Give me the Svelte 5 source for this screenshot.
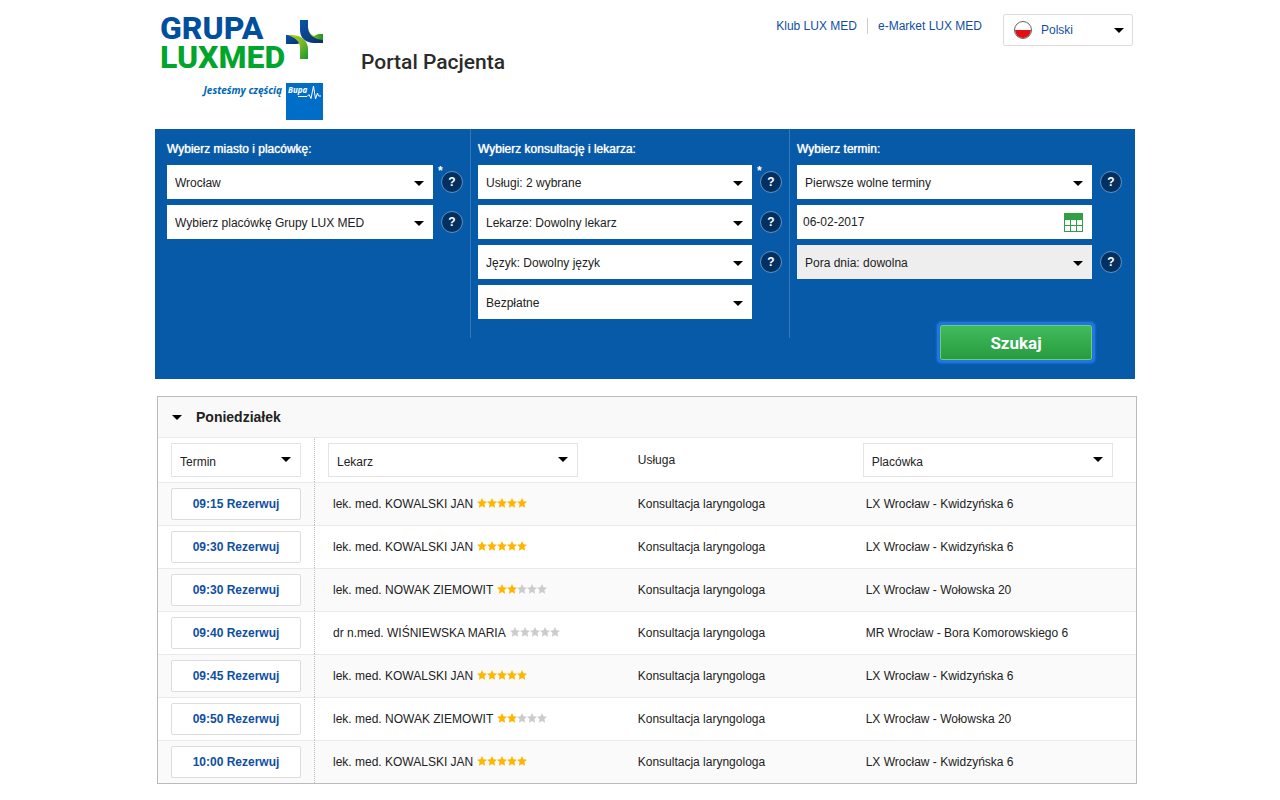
<script lang="ts">
  interface Field {
    id: string
    label: string
    value: string
    type?: 'select' | 'date'
    required?: boolean
    help?: boolean
    disabled?: boolean
  }

  interface Visit {
    time: string
    doctor: string
    rating: number
    clinic: string
  }

  const service = 'Konsultacja laryngologa'

  const groups: { title: string; fields: Field[] }[] = [
    {
      title: 'Wybierz miasto i placówkę:',
      fields: [
        { id: 'city', label: 'Miasto', value: 'Wrocław', required: true, help: true },
        { id: 'clinic', label: 'Placówka', value: 'Wybierz placówkę Grupy LUX MED', help: true }
      ]
    },
    {
      title: 'Wybierz konsultację i lekarza:',
      fields: [
        { id: 'service', label: 'Usługi', value: 'Usługi: 2 wybrane', required: true, help: true },
        { id: 'doctor', label: 'Lekarze', value: 'Lekarze: Dowolny lekarz', help: true },
        { id: 'language', label: 'Język', value: 'Język: Dowolny język', help: true },
        { id: 'payment', label: 'Płatność', value: 'Bezpłatne' }
      ]
    },
    {
      title: 'Wybierz termin:',
      fields: [
        { id: 'term', label: 'Termin', value: 'Pierwsze wolne terminy', help: true },
        { id: 'date', label: 'Data', value: '06-02-2017', type: 'date' },
        { id: 'daytime', label: 'Pora dnia', value: 'Pora dnia: dowolna', help: true, disabled: true }
      ]
    }
  ]

  const visits: Visit[] = [
    { time: '09:15', doctor: 'lek. med. KOWALSKI JAN', rating: 5, clinic: 'LX Wrocław - Kwidzyńska 6' },
    { time: '09:30', doctor: 'lek. med. KOWALSKI JAN', rating: 5, clinic: 'LX Wrocław - Kwidzyńska 6' },
    { time: '09:30', doctor: 'lek. med. NOWAK ZIEMOWIT', rating: 2, clinic: 'LX Wrocław - Wołowska 20' },
    { time: '09:40', doctor: 'dr n.med. WIŚNIEWSKA MARIA', rating: 0, clinic: 'MR Wrocław - Bora Komorowskiego 6' },
    { time: '09:45', doctor: 'lek. med. KOWALSKI JAN', rating: 5, clinic: 'LX Wrocław - Kwidzyńska 6' },
    { time: '09:50', doctor: 'lek. med. NOWAK ZIEMOWIT', rating: 2, clinic: 'LX Wrocław - Wołowska 20' },
    { time: '10:00', doctor: 'lek. med. KOWALSKI JAN', rating: 5, clinic: 'LX Wrocław - Kwidzyńska 6' }
  ]

  let open = $state(true)
</script>

<div class="page">
  <header class="header">
    <a class="logo" href="#home">
      <span class="logo-main">
        <span class="logo-name">
          <span class="blue">GRUPA</span>
          <span class="green">LUXMED</span>
        </span>
        <svg class="cross" viewBox="0 0 37 39" width="37" height="39" aria-hidden="true">
          <defs>
            <linearGradient id="stem" x1="0" y1="0" x2="1" y2="1">
              <stop offset="0" stop-color="#b5cf12" />
              <stop offset="0.5" stop-color="#7db928" />
              <stop offset="1" stop-color="#17962f" />
            </linearGradient>
            <linearGradient id="leaf" x1="0" y1="0" x2="1" y2="0">
              <stop offset="0" stop-color="#c3d600" />
              <stop offset="1" stop-color="#17962f" />
            </linearGradient>
            <linearGradient id="navy" x1="0" y1="0" x2="1" y2="1">
              <stop offset="0" stop-color="#0a56a8" />
              <stop offset="1" stop-color="#0b2f6b" />
            </linearGradient>
          </defs>
          <path fill="url(#leaf)" d="M22 8c1 4 3 7 6 8c2-1 3-2 5-2h4v9C29 21 22 16 20 8z" />
          <path fill="url(#navy)" d="M14 0h8v7c0 8 6 12 15 13v3h-9c-8 0-14-5-14-13z" />
          <path fill="url(#navy)" d="M0 15h5l10 7c-2 2-4 2-6 2H0z" />
          <path fill="url(#stem)" d="M2 15c13-1 20 5 20 14v10h-8V28c0-6-4-10-12-13z" />
        </svg>
      </span>
      <span class="logo-part">
        <span class="claim">Jesteśmy częścią</span>
        <span class="bupa">
          <span>Bupa</span>
          <svg viewBox="0 0 37 37" width="37" height="37" aria-hidden="true">
            <path fill="none" stroke="#fff" d="M12 13.5h9l2-2 2 4L27.500 3l2 13 2-6 1 3h2.500" />
          </svg>
        </span>
      </span>
    </a>
    <h1>Portal Pacjenta</h1>
    <nav class="links">
      <a href="#klub">Klub LUX MED</a>
      <a href="#market">e-Market LUX MED</a>
    </nav>
    <div class="select lang">
      <svg class="flag" viewBox="0 0 18 18" width="18" height="18" aria-hidden="true">
        <circle cx="9" cy="9" r="8" fill="#fff" />
        <path fill="#e30f13" d="M1 9h16a8 8 0 0 1-16 0z" />
        <circle cx="9" cy="9" r="8.500" fill="none" stroke="#666" />
      </svg>
      <select aria-label="Język portalu"><option>Polski</option></select>
    </div>
  </header>

  <form class="search" onsubmit={(e) => e.preventDefault()}>
    {#each groups as group, i}
      <section class="group">
        <h2>{group.title}</h2>
        {#each group.fields as field}
          <div class="field">
            {#if field.type === 'date'}
              <div class="date">
                <input aria-label={field.label} id={field.id} value={field.value} />
                <svg viewBox="0 0 19 19" width="19" height="19" aria-hidden="true">
                  <path fill="#2fa043" d="M0 0h19v19H0z" />
                  <path fill="#fff" d="M1 7h5v5H1zM7 7h5v5H7zM13 7h5v5h-5zM1 13h5v5H1zM7 13h5v5H7zM13 13h5v5h-5z" />
                </svg>
              </div>
            {:else}
              <div class="select" class:disabled={field.disabled}>
                <select aria-label={field.label} id={field.id} disabled={field.disabled}>
                  <option>{field.value}</option>
                </select>
              </div>
            {/if}
            <div class="hint">
              {#if field.required}<span class="required">*</span>{/if}
              {#if field.help}<button class="help" type="button">?</button>{/if}
            </div>
          </div>
        {/each}
        {#if i === groups.length - 1}
          <button class="submit" type="submit">Szukaj</button>
        {/if}
      </section>
    {/each}
  </form>

  <section class="results">
    <button class="day" type="button" aria-expanded={open} onclick={() => (open = !open)}>
      Poniedziałek
    </button>
    {#if open}
      <table>
        <thead>
          <tr>
            <th class="term">
              <div class="select filter"><select aria-label="Termin wizyty"><option>Termin</option></select></div>
            </th>
            <th class="doctor">
              <div class="select filter"><select aria-label="Lekarz"><option>Lekarz</option></select></div>
            </th>
            <th class="service">Usługa</th>
            <th class="clinic">
              <div class="select filter"><select aria-label="Placówka wizyty"><option>Placówka</option></select></div>
            </th>
          </tr>
        </thead>
        <tbody>
          {#each visits as visit}
            <tr>
              <td class="term"><button class="book" type="button">{visit.time} Rezerwuj</button></td>
              <td class="doctor">
                <div class="person">
                  {visit.doctor}
                  <svg class="stars" viewBox="0 0 50 10" width="50" height="10" aria-hidden="true">
                    {#each [0, 1, 2, 3, 4] as n}
                      <path
                        class:on={n < visit.rating}
                        transform="translate({n * 10} 0)"
                        d="M5 0l1.500 3.300 3.500.4-2.600 2.400.7 3.700L5 8 1.900 9.800l.7-3.700L0 3.700l3.500-.4z"
                      />
                    {/each}
                  </svg>
                </div>
              </td>
              <td>{service}</td>
              <td class="clinic">{visit.clinic}</td>
            </tr>
          {/each}
        </tbody>
      </table>
    {/if}
  </section>
</div>

<style>
  :global(body) {
    background: #fff;
    color: #222;
    font: 12px/16px 'Liberation Sans', Arial, sans-serif;
  }

  button,
  input,
  select {
    margin: 0;
    font: inherit;
    color: inherit;
  }

  button {
    padding: 0;
    cursor: pointer;
  }

  .page {
    box-sizing: border-box;
    max-width: 990px;
    margin: 0 auto;
    padding: 0 0 16px 10px;
  }

  .header {
    display: flex;
    align-items: flex-start;
    padding: 14px 2px 9px 5px;
  }

  .logo {
    width: 163px;
    text-decoration: none;
  }

  .logo-main,
  .logo-part {
    display: flex;
    justify-content: space-between;
  }

  .logo-name {
    display: flex;
    flex-direction: column;
    width: 122px;
    font: 800 32px/29px Roboto, sans-serif;
  }

  .blue {
    color: #004f9f;
  }

  .green {
    color: #00a52b;
  }

  .cross {
    flex: none;
    margin-top: 6px;
  }

  .logo-part {
    justify-content: flex-end;
    gap: 4px;
    margin-top: 11px;
  }

  .claim {
    color: #0066b3;
    font: italic 700 10px/14px 'Noto Sans', sans-serif;
  }

  .bupa {
    position: relative;
    width: 37px;
    height: 37px;
    background: #006ec7;
    color: #fff;
    font: italic 700 8px/14px 'Noto Sans', sans-serif;
    text-indent: 2px;
  }

  .bupa svg {
    position: absolute;
    inset: 0;
  }

  h1 {
    flex: 1;
    margin: 34px 0 0 38px;
    color: #2b2b2b;
    font: 500 21px/28px Roboto, sans-serif;
  }

  .links {
    display: flex;
    margin: 4px 21px 0 0;
  }

  .links a {
    color: #0f4fa3;
    text-decoration: none;
  }

  .links a + a {
    margin-left: 10px;
    padding-left: 10px;
    border-left: 1px solid #ccc;
  }

  .select {
    position: relative;
    flex: 1;
    background: #fff;
  }

  .select::after {
    content: '';
    position: absolute;
    top: 16px;
    right: 9px;
    border: 5px solid transparent;
    border-top-color: #000;
    border-bottom: 0;
    pointer-events: none;
  }

  .select select {
    display: block;
    width: 100%;
    height: 34px;
    padding: 2px 24px 0 8px;
    border: 0;
    border-radius: 0;
    background: none;
    appearance: none;
    opacity: 1;
  }

  .disabled {
    background: #eee;
  }

  .lang {
    flex: none;
    width: 128px;
    border: 1px solid #ddd;
    border-radius: 2px;
    color: #0f4fa3;
  }

  .lang select {
    height: 30px;
    padding: 0 24px 0 37px;
  }

  .lang::after {
    top: 13px;
    right: 8px;
  }

  .flag {
    position: absolute;
    top: 6px;
    left: 10px;
    overflow: visible;
  }

  .search {
    display: grid;
    grid-template-columns: 316fr 319fr 345fr;
    align-items: start;
    padding-bottom: 19px;
    background: #075aa8;
  }

  .group {
    box-sizing: border-box;
    min-height: 209px;
    padding: 12px 7px 0;
    border-right: 1px solid #3478b8;
  }

  .group:first-child {
    padding-left: 12px;
  }

  .group:last-child {
    padding-right: 13px;
    border: 0;
  }

  h2 {
    margin: 0 0 8px;
    color: #fff;
    font: inherit;
    text-shadow: 0 0 1px #fff;
  }

  .field {
    display: flex;
    margin-bottom: 6px;
  }

  .date {
    display: flex;
    flex: 1;
    align-items: center;
    height: 34px;
    padding-right: 9px;
    background: #fff;
  }

  .date input {
    flex: 1;
    min-width: 0;
    padding: 0 6px;
    border: 0;
    background: none;
  }

  .hint {
    position: relative;
    display: flex;
    align-items: center;
    width: 22px;
    margin-left: 8px;
  }

  .required {
    position: absolute;
    top: -2px;
    left: -3px;
    color: #fff;
    font-weight: 700;
  }

  .help {
    width: 22px;
    height: 22px;
    border: 1px solid #5b93c9;
    border-radius: 50%;
    background: #04305f;
    color: #fff;
    font-weight: 700;
  }

  .submit {
    display: block;
    width: 152px;
    height: 35px;
    margin: 46px 30px 0 auto;
    border: 1px solid #6ccb80;
    border-radius: 2px;
    background: linear-gradient(#41bb5b, #279c3f);
    box-shadow: 0 0 0 3px #1f76dc, 0 0 2px 4px #1a69c8;
    color: #fff;
    font: 700 17px/32px Roboto, sans-serif;
  }

  .results {
    margin: 17px -2px 0 2px;
    border: 1px solid #bbb;
  }

  .day {
    display: flex;
    align-items: center;
    gap: 14px;
    width: 100%;
    height: 40px;
    padding-left: 14px;
    border: 0;
    background: #f9f9f9;
    font-size: 14px;
    font-weight: 700;
  }

  .day::before {
    content: '';
    border: 5px solid transparent;
    border-top-color: #000;
    border-bottom: 0;
  }

  table {
    width: 100%;
    border-collapse: separate;
    border-spacing: 0;
    table-layout: fixed;
  }

  th,
  td {
    box-sizing: border-box;
    padding: 5px 0;
    border-top: 1px solid #eaeaea;
    font-weight: 400;
    text-align: left;
  }

  th.term {
    width: 157px;
  }

  th.doctor {
    width: 33%;
  }

  th.service {
    width: 23%;
  }

  .term {
    padding-left: 13px;
    border-right: 1px dotted #bbb;
  }

  th.doctor {
    padding-left: 13px;
  }

  td.doctor {
    padding-left: 18px;
  }

  td.clinic {
    padding-left: 3px;
  }

  tbody tr:nth-child(odd) {
    background: #fafafa;
  }

  .filter {
    box-sizing: border-box;
    max-width: 250px;
    border: 1px solid #e4e4e4;
  }

  .term .filter,
  .book {
    width: 130px;
  }

  .filter select {
    height: 32px;
    padding-top: 4px;
  }

  .filter::after {
    top: 13px;
  }

  .book {
    display: block;
    height: 32px;
    border: 1px solid #ddd;
    border-radius: 2px;
    background: #fff;
    color: #0f4fa3;
    font-weight: 700;
  }

  .person {
    display: flex;
    align-items: center;
    gap: 4px;
  }

  .stars {
    margin-bottom: 2px;
  }

  .stars path {
    fill: #ccc;
  }

  .stars .on {
    fill: #ffb600;
  }
</style>
